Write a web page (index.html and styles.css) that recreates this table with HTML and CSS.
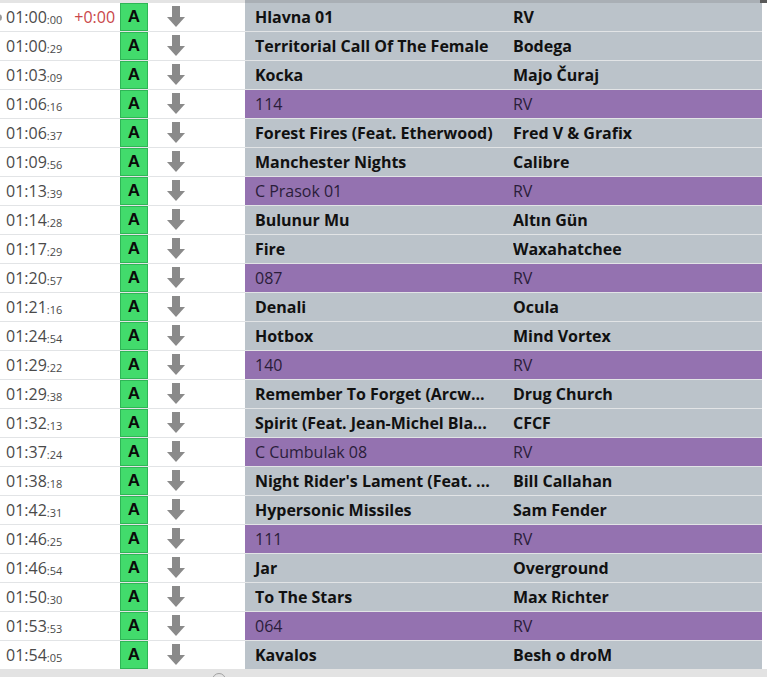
FILE: index.html
```html
<!DOCTYPE html>
<html>
<head>
<meta charset="utf-8">
<link rel="stylesheet" href="styles.css">
</head>
<body>
<div class="list">
  <div class="topstrip"><div class="ts-a"></div><div class="ts-b"></div><div class="ts-c"></div></div>

  <div class="row"><div class="time"><span class="dot"></span>01:00<small>:00</small><span class="plus">+0:00</span></div><div class="cell-a"><span class="a">A</span></div><div class="cell-arrow"><svg class="arrow" viewBox="0 0 18 21"><rect x="5" y="0" width="8" height="11"/><polygon points="0,11 18,11 9,21"/></svg></div><div class="title">Hlavna 01</div><div class="artist">RV</div></div>
  <div class="row"><div class="time">01:00<small>:29</small></div><div class="cell-a"><span class="a">A</span></div><div class="cell-arrow"><svg class="arrow" viewBox="0 0 18 21"><rect x="5" y="0" width="8" height="11"/><polygon points="0,11 18,11 9,21"/></svg></div><div class="title">Territorial Call Of The Female</div><div class="artist">Bodega</div></div>
  <div class="row"><div class="time">01:03<small>:09</small></div><div class="cell-a"><span class="a">A</span></div><div class="cell-arrow"><svg class="arrow" viewBox="0 0 18 21"><rect x="5" y="0" width="8" height="11"/><polygon points="0,11 18,11 9,21"/></svg></div><div class="title">Kocka</div><div class="artist">Majo Čuraj</div></div>
  <div class="row jingle"><div class="time">01:06<small>:16</small></div><div class="cell-a"><span class="a">A</span></div><div class="cell-arrow"><svg class="arrow" viewBox="0 0 18 21"><rect x="5" y="0" width="8" height="11"/><polygon points="0,11 18,11 9,21"/></svg></div><div class="title">114</div><div class="artist">RV</div></div>
  <div class="row"><div class="time">01:06<small>:37</small></div><div class="cell-a"><span class="a">A</span></div><div class="cell-arrow"><svg class="arrow" viewBox="0 0 18 21"><rect x="5" y="0" width="8" height="11"/><polygon points="0,11 18,11 9,21"/></svg></div><div class="title">Forest Fires (Feat. Etherwood)</div><div class="artist">Fred V &amp; Grafix</div></div>
  <div class="row"><div class="time">01:09<small>:56</small></div><div class="cell-a"><span class="a">A</span></div><div class="cell-arrow"><svg class="arrow" viewBox="0 0 18 21"><rect x="5" y="0" width="8" height="11"/><polygon points="0,11 18,11 9,21"/></svg></div><div class="title">Manchester Nights</div><div class="artist">Calibre</div></div>
  <div class="row jingle"><div class="time">01:13<small>:39</small></div><div class="cell-a"><span class="a">A</span></div><div class="cell-arrow"><svg class="arrow" viewBox="0 0 18 21"><rect x="5" y="0" width="8" height="11"/><polygon points="0,11 18,11 9,21"/></svg></div><div class="title">C Prasok 01</div><div class="artist">RV</div></div>
  <div class="row"><div class="time">01:14<small>:28</small></div><div class="cell-a"><span class="a">A</span></div><div class="cell-arrow"><svg class="arrow" viewBox="0 0 18 21"><rect x="5" y="0" width="8" height="11"/><polygon points="0,11 18,11 9,21"/></svg></div><div class="title">Bulunur Mu</div><div class="artist">Altın Gün</div></div>
  <div class="row"><div class="time">01:17<small>:29</small></div><div class="cell-a"><span class="a">A</span></div><div class="cell-arrow"><svg class="arrow" viewBox="0 0 18 21"><rect x="5" y="0" width="8" height="11"/><polygon points="0,11 18,11 9,21"/></svg></div><div class="title">Fire</div><div class="artist">Waxahatchee</div></div>
  <div class="row jingle"><div class="time">01:20<small>:57</small></div><div class="cell-a"><span class="a">A</span></div><div class="cell-arrow"><svg class="arrow" viewBox="0 0 18 21"><rect x="5" y="0" width="8" height="11"/><polygon points="0,11 18,11 9,21"/></svg></div><div class="title">087</div><div class="artist">RV</div></div>
  <div class="row"><div class="time">01:21<small>:16</small></div><div class="cell-a"><span class="a">A</span></div><div class="cell-arrow"><svg class="arrow" viewBox="0 0 18 21"><rect x="5" y="0" width="8" height="11"/><polygon points="0,11 18,11 9,21"/></svg></div><div class="title">Denali</div><div class="artist">Ocula</div></div>
  <div class="row"><div class="time">01:24<small>:54</small></div><div class="cell-a"><span class="a">A</span></div><div class="cell-arrow"><svg class="arrow" viewBox="0 0 18 21"><rect x="5" y="0" width="8" height="11"/><polygon points="0,11 18,11 9,21"/></svg></div><div class="title">Hotbox</div><div class="artist">Mind Vortex</div></div>
  <div class="row jingle"><div class="time">01:29<small>:22</small></div><div class="cell-a"><span class="a">A</span></div><div class="cell-arrow"><svg class="arrow" viewBox="0 0 18 21"><rect x="5" y="0" width="8" height="11"/><polygon points="0,11 18,11 9,21"/></svg></div><div class="title">140</div><div class="artist">RV</div></div>
  <div class="row"><div class="time">01:29<small>:38</small></div><div class="cell-a"><span class="a">A</span></div><div class="cell-arrow"><svg class="arrow" viewBox="0 0 18 21"><rect x="5" y="0" width="8" height="11"/><polygon points="0,11 18,11 9,21"/></svg></div><div class="title">Remember To Forget (Arcw...</div><div class="artist">Drug Church</div></div>
  <div class="row"><div class="time">01:32<small>:13</small></div><div class="cell-a"><span class="a">A</span></div><div class="cell-arrow"><svg class="arrow" viewBox="0 0 18 21"><rect x="5" y="0" width="8" height="11"/><polygon points="0,11 18,11 9,21"/></svg></div><div class="title">Spirit (Feat. Jean-Michel Bla...</div><div class="artist">CFCF</div></div>
  <div class="row jingle"><div class="time">01:37<small>:24</small></div><div class="cell-a"><span class="a">A</span></div><div class="cell-arrow"><svg class="arrow" viewBox="0 0 18 21"><rect x="5" y="0" width="8" height="11"/><polygon points="0,11 18,11 9,21"/></svg></div><div class="title">C Cumbulak 08</div><div class="artist">RV</div></div>
  <div class="row"><div class="time">01:38<small>:18</small></div><div class="cell-a"><span class="a">A</span></div><div class="cell-arrow"><svg class="arrow" viewBox="0 0 18 21"><rect x="5" y="0" width="8" height="11"/><polygon points="0,11 18,11 9,21"/></svg></div><div class="title">Night Rider's Lament (Feat. ...</div><div class="artist">Bill Callahan</div></div>
  <div class="row"><div class="time">01:42<small>:31</small></div><div class="cell-a"><span class="a">A</span></div><div class="cell-arrow"><svg class="arrow" viewBox="0 0 18 21"><rect x="5" y="0" width="8" height="11"/><polygon points="0,11 18,11 9,21"/></svg></div><div class="title">Hypersonic Missiles</div><div class="artist">Sam Fender</div></div>
  <div class="row jingle"><div class="time">01:46<small>:25</small></div><div class="cell-a"><span class="a">A</span></div><div class="cell-arrow"><svg class="arrow" viewBox="0 0 18 21"><rect x="5" y="0" width="8" height="11"/><polygon points="0,11 18,11 9,21"/></svg></div><div class="title">111</div><div class="artist">RV</div></div>
  <div class="row"><div class="time">01:46<small>:54</small></div><div class="cell-a"><span class="a">A</span></div><div class="cell-arrow"><svg class="arrow" viewBox="0 0 18 21"><rect x="5" y="0" width="8" height="11"/><polygon points="0,11 18,11 9,21"/></svg></div><div class="title">Jar</div><div class="artist">Overground</div></div>
  <div class="row"><div class="time">01:50<small>:30</small></div><div class="cell-a"><span class="a">A</span></div><div class="cell-arrow"><svg class="arrow" viewBox="0 0 18 21"><rect x="5" y="0" width="8" height="11"/><polygon points="0,11 18,11 9,21"/></svg></div><div class="title">To The Stars</div><div class="artist">Max Richter</div></div>
  <div class="row jingle"><div class="time">01:53<small>:53</small></div><div class="cell-a"><span class="a">A</span></div><div class="cell-arrow"><svg class="arrow" viewBox="0 0 18 21"><rect x="5" y="0" width="8" height="11"/><polygon points="0,11 18,11 9,21"/></svg></div><div class="title">064</div><div class="artist">RV</div></div>
  <div class="row last"><div class="time">01:54<small>:05</small></div><div class="cell-a"><span class="a">A</span></div><div class="cell-arrow"><svg class="arrow" viewBox="0 0 18 21"><rect x="5" y="0" width="8" height="11"/><polygon points="0,11 18,11 9,21"/></svg></div><div class="title">Kavalos</div><div class="artist">Besh o droM</div></div>

  <div class="bottombar"><span class="knob"></span></div>
</div>
</body>
</html>
```
FILE: styles.css
```css
html, body {
  margin: 0;
  padding: 0;
  background: #ffffff;
  overflow: hidden;
}
body {
  width: 767px;
  height: 677px;
  font-family: "Open Sans", "Noto Sans", sans-serif;
}
.list {
  width: 767px;
  display: flex;
  flex-direction: column;
}
.topstrip {
  display: grid;
  grid-template-columns: 245px 515px 7px;
  height: 3px;
}
.ts-a { background: #e4e4e4; }
.ts-b { background: #a9afb5; }
.ts-c { background: #5a5a5a; }

.row {
  position: relative;
  display: grid;
  grid-template-columns: 120px 28px 97px 268px 249px;
  width: 762px;
  height: 28px;
  border-bottom: 1px solid #e2e4e6;
}
.row.last { border-bottom: none; height: 28px; }

.time {
  position: relative;
  display: flex;
  align-items: center;
  padding-left: 6px;
  font-size: 16px;
  color: #4a4a4a;
  white-space: nowrap;
}
.time small {
  font-size: 11px;
  margin-top: 5px;
}
.plus {
  color: #c9474a;
  margin-left: 12px;
}
.dot {
  position: absolute;
  left: -5px;
  top: 11px;
  width: 7px;
  height: 7px;
  border-radius: 50%;
  background: #9a9a9a;
}

.cell-a {
  display: flex;
}
.a {
  flex: 1;
  display: flex;
  align-items: center;
  justify-content: center;
  background: #42db6c;
  border: 1px solid #2fb556;
  font-family: "Liberation Sans", Arial, sans-serif;
  font-weight: bold;
  font-size: 17px;
  color: #0a0a0a;
}

.cell-arrow {
  display: flex;
  align-items: flex-start;
  padding-left: 19px;
  padding-top: 3px;
}
.arrow {
  width: 18px;
  height: 21px;
  fill: #8a8a8a;
}

.title, .artist {
  display: flex;
  align-items: center;
  background: #bbc3ca;
  font-size: 16px;
  font-weight: 700;
  color: #111111;
  white-space: nowrap;
  overflow: hidden;
  letter-spacing: -0.02px;
}
.title { padding-left: 10px; }
.artist { padding-left: 0; }

.jingle .title, .jingle .artist {
  background: #9472b0;
  font-weight: 400;
  color: #2a1d3a;
}

.bottombar {
  position: relative;
  height: 9px;
  background: #e3e3e3;
  border-top: 1px solid #e3e3e3;
}
.knob {
  position: absolute;
  left: 212px;
  top: 3px;
  width: 14px;
  height: 14px;
  border-radius: 50%;
  border: 1px solid #a0a0a0;
  box-sizing: border-box;
}
```
